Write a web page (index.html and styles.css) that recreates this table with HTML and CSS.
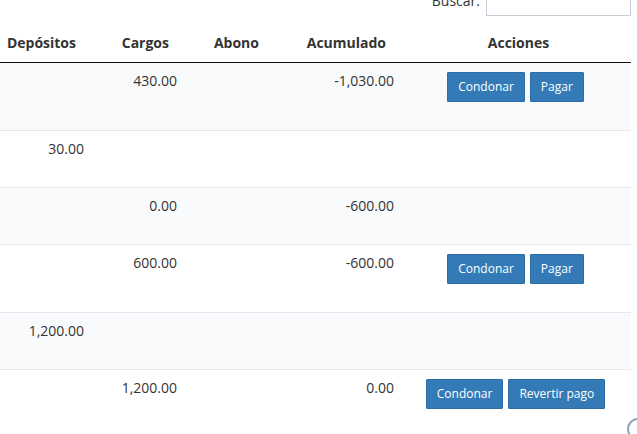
FILE: index.html
```
<!DOCTYPE html>
<html lang="es">
<head>
<meta charset="utf-8">
<link rel="stylesheet" href="styles.css">
</head>
<body>
<div class="page">
  <div class="toolbar">
    <label class="search">Buscar: <input type="text" class="search-input"></label>
  </div>
  <table class="grid">
    <colgroup>
      <col class="c-dep"><col class="c-car"><col class="c-abo"><col class="c-acu"><col class="c-acc">
    </colgroup>
    <thead>
      <tr>
        <th>Depósitos</th>
        <th>Cargos</th>
        <th>Abono</th>
        <th>Acumulado</th>
        <th class="th-actions">Acciones</th>
      </tr>
    </thead>
    <tbody>
      <tr class="odd">
        <td></td><td>430.00</td><td></td><td>-1,030.00</td>
        <td class="actions"><button class="btn">Condonar</button><button class="btn">Pagar</button></td>
      </tr>
      <tr>
        <td>30.00</td><td></td><td></td><td></td><td class="actions"></td>
      </tr>
      <tr class="odd">
        <td></td><td>0.00</td><td></td><td>-600.00</td><td class="actions"></td>
      </tr>
      <tr>
        <td></td><td>600.00</td><td></td><td>-600.00</td>
        <td class="actions"><button class="btn">Condonar</button><button class="btn">Pagar</button></td>
      </tr>
      <tr class="odd">
        <td>1,200.00</td><td></td><td></td><td></td><td class="actions"></td>
      </tr>
      <tr>
        <td></td><td>1,200.00</td><td></td><td>0.00</td>
        <td class="actions"><button class="btn">Condonar</button><button class="btn">Revertir pago</button></td>
      </tr>
    </tbody>
  </table>
  <div class="scroll-top"></div>
</div>
</body>
</html>
```

FILE: styles.css
```
html, body {
  margin: 0;
  padding: 0;
  background: #ffffff;
  overflow: hidden;
}
body {
  font-family: "Open Sans", "Liberation Sans", sans-serif;
  font-size: 14px;
  line-height: 20px;
  color: #333333;
}
.page {
  width: 637px;
  height: 434px;
  position: relative;
  overflow: hidden;
}
.toolbar {
  width: 631px;
  display: flex;
  justify-content: flex-end;
  margin-top: -14px;
  margin-bottom: 7px;
}
.search {
  display: flex;
  align-items: center;
  gap: 6px;
  font-size: 14px;
  color: #333;
}
.search-input {
  width: 143px;
  height: 28px;
  box-sizing: content-box;
  border: 1px solid #c9ced8;
  padding: 0;
  margin: 0;
  background: #fff;
}
.grid {
  width: 631px;
  table-layout: fixed;
  border-collapse: collapse;
  border-spacing: 0;
}
.c-dep { width: 92px; }
.c-car { width: 93px; }
.c-abo { width: 90px; }
.c-acu { width: 127px; }
.c-acc { width: 229px; }
.grid th {
  font-weight: 700;
  text-align: right;
  padding: 10px 16px 9px 0;
  border-bottom: 1px solid #111111;
  white-space: nowrap;
}
.grid th.th-actions {
  text-align: center;
  padding-left: 4px;
  padding-right: 0;
}
.grid td {
  text-align: right;
  vertical-align: top;
  padding: 8px 8px 28px 0;
  border-top: 1px solid #e6e8ec;
  white-space: nowrap;
}
.grid thead + tbody tr:first-child td {
  border-top: none;
}
.grid tr.odd td {
  background: #f9fafc;
}
.grid td.actions {
  text-align: center;
  padding-right: 2px;
  padding-left: 0;
  font-size: 0;
}
.btn {
  font-family: "Open Sans", "Liberation Sans", sans-serif;
  font-size: 12px;
  line-height: 18px;
  color: #ffffff;
  background: #337ab7;
  border: 1px solid #2e6da4;
  border-radius: 1px;
  padding: 5px 10px;
  margin: 1px 0 0;
  vertical-align: top;
}
.btn + .btn {
  margin-left: 5px;
}
.scroll-top {
  position: absolute;
  left: 627px;
  top: 418px;
  width: 22px;
  height: 22px;
  border: 2px solid #8fa1bb;
  border-radius: 50%;
  box-sizing: border-box;
}
```
